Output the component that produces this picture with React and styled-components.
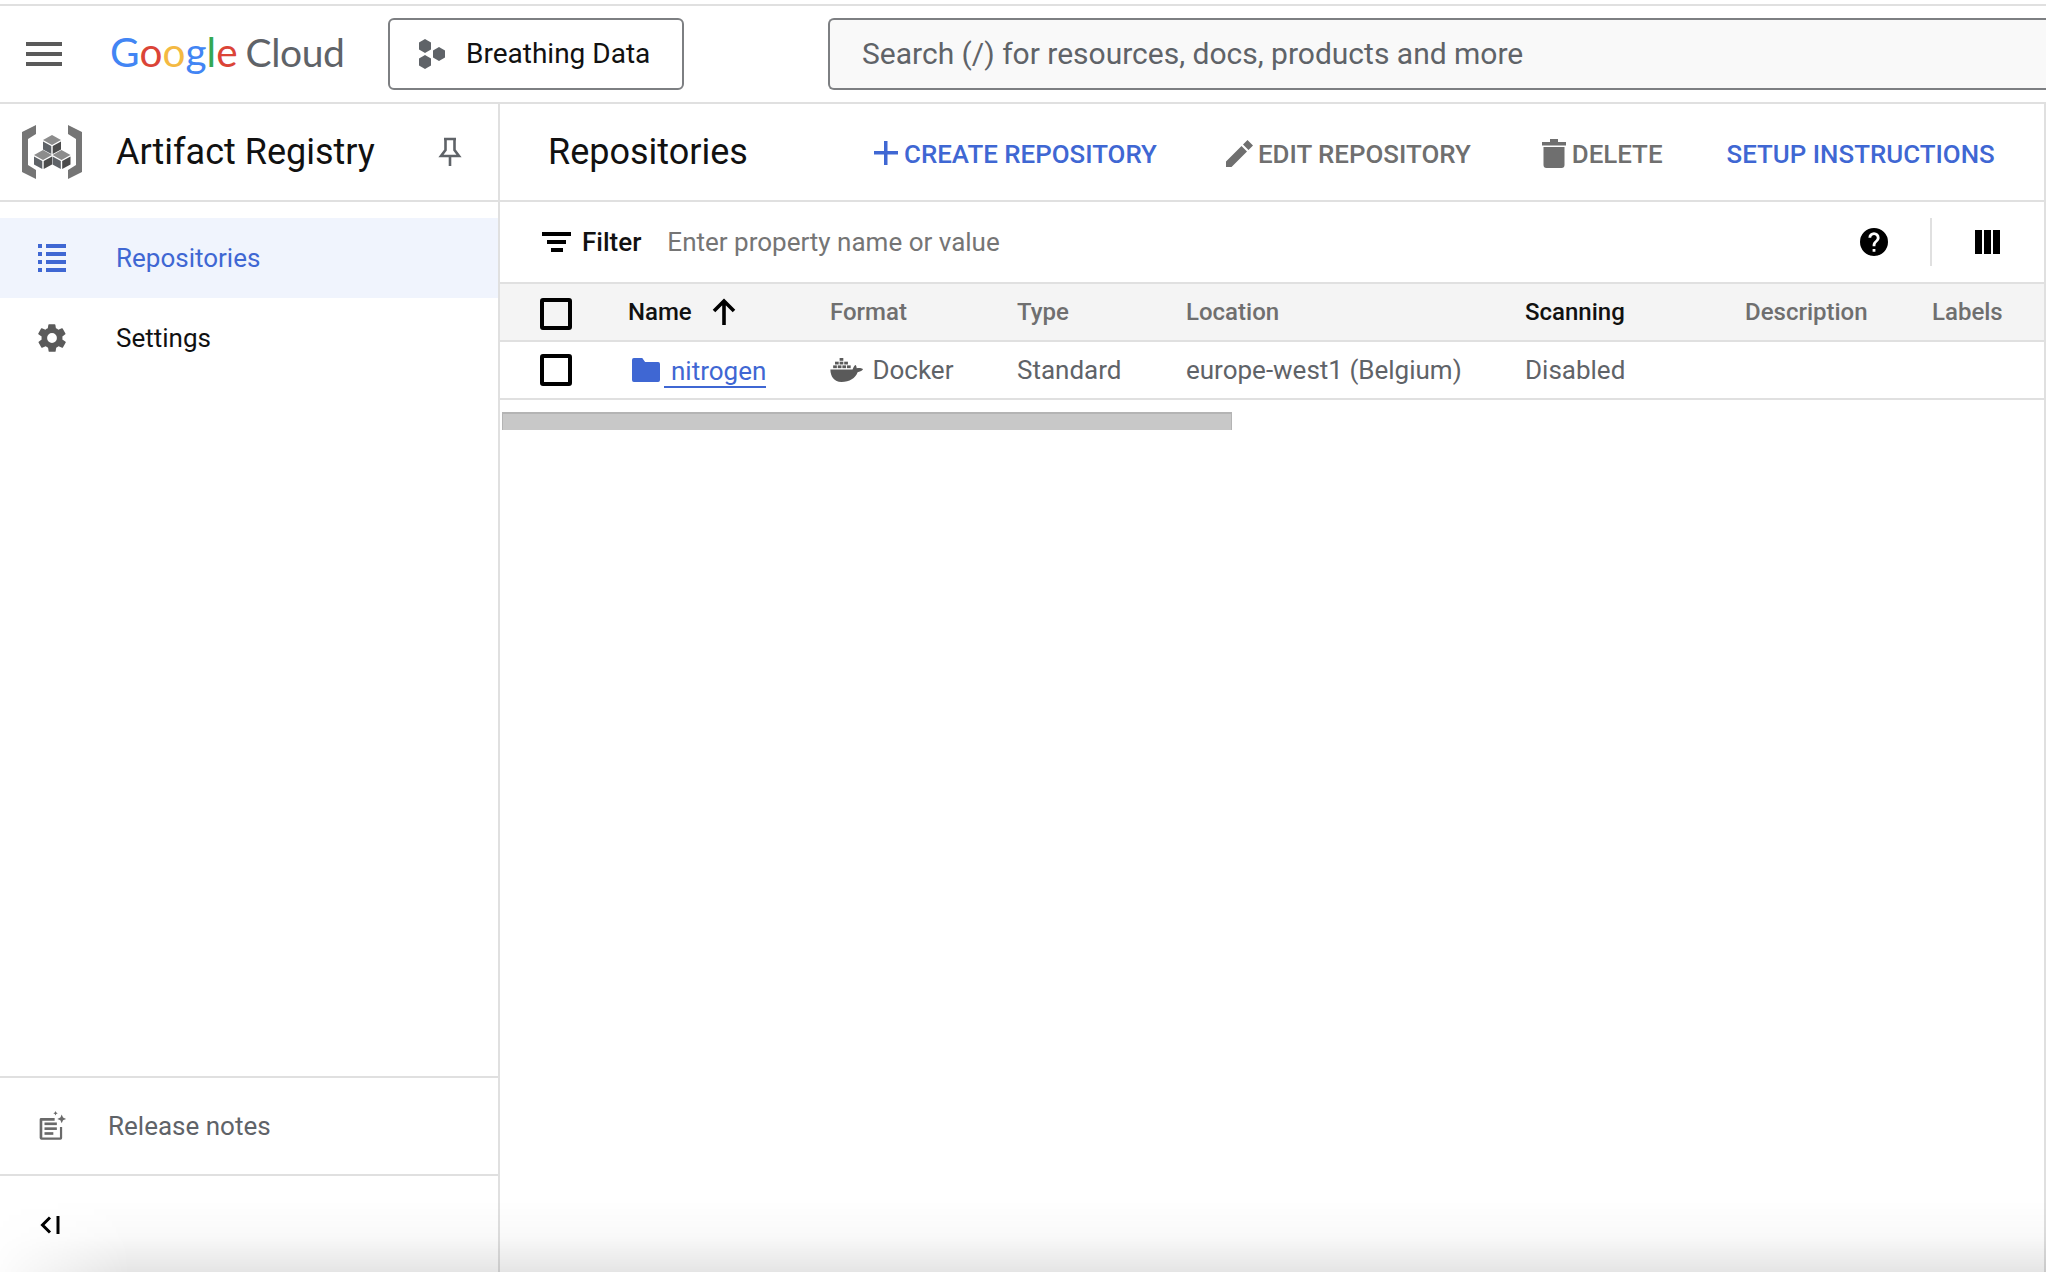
import React from "react";
import styled, { createGlobalStyle } from "styled-components";

const GlobalStyle = createGlobalStyle`
  html, body {
    margin: 0;
    padding: 0;
    height: 100%;
    background: #fff;
    overflow: hidden;
  }
  #root { height: 100%; }
`;

const BLUE = "#3f67d3";
const LINE = "#e0e0e0";
const GREY = "#6f6f6f";

// PAGE
const Page = styled.div`
  position: relative;
  width: 2046px;
  height: 1272px;
  display: flex;
  flex-direction: column;
  font-family: Roboto, "Liberation Sans", sans-serif;
  color: #111;
  overflow: hidden;
  background: #fff;
  padding-top: 4px;
  box-sizing: border-box;
`;

const BottomShade = styled.div`
  position: absolute;
  left: 0;
  right: 0;
  bottom: 0;
  height: 72px;
  pointer-events: none;
  background: linear-gradient(to bottom, rgba(0,0,0,0), rgba(0,0,0,0.025) 50%, rgba(0,0,0,0.1));
  mask-image: linear-gradient(to right, rgba(0,0,0,0.1), #000 130px);
`;

// TOP BAR
const TopBar = styled.header`
  height: 96px;
  flex: none;
  display: flex;
  align-items: center;
  border-top: 2px solid ${LINE};
  border-bottom: 2px solid ${LINE};
  box-sizing: content-box;
`;
const Burger = styled.div`
  width: 36px;
  margin-left: 26px;
  height: 24px;
  border-top: 4px solid #5a5a5a;
  border-bottom: 4px solid #5a5a5a;
  box-sizing: border-box;
  position: relative;
  flex: none;
  &::after {
    content: "";
    position: absolute;
    left: 0;
    right: 0;
    top: 6px;
    height: 4px;
    background: #5a5a5a;
  }
`;
const Logo = styled.div`
  margin-left: 48px;
  width: 236px;
  display: flex;
  align-items: baseline;
  font-size: 40.5px;
  line-height: 1;
  flex: none;
  padding-bottom: 4px;
  font-family: Lato, Roboto, sans-serif;
`;
const LogoLetter = styled.span`
  color: ${(p) => p.$c};
`;
const LogoCloud = styled.span`
  color: #5f6368;
  margin-left: 8px;
  font-size: 39px;
  letter-spacing: -0.4px;
`;
const ProjectButton = styled.div`
  margin-left: 42px;
  width: 296px;
  height: 72px;
  border: 2px solid #7d7f82;
  border-radius: 6px;
  box-sizing: border-box;
  display: flex;
  align-items: center;
  padding: 0 0 1px 28px;
  gap: 20px;
  font-size: 28px;
  flex: none;
`;
const SearchBox = styled.div`
  margin-left: 144px;
  flex: 1;
  height: 72px;
  border: 2px solid #7d7f82;
  border-right: none;
  border-radius: 6px 0 0 6px;
  box-sizing: border-box;
  background: #f9f9f9;
  display: flex;
  align-items: center;
  padding: 0 0 2px 32px;
  font-size: 30px;
  color: #5f6368;
`;

// BODY
const Body = styled.div`
  flex: 1;
  display: flex;
  min-height: 0;
`;
const Side = styled.aside`
  width: 498px;
  flex: none;
  border-right: 2px solid ${LINE};
  display: flex;
  flex-direction: column;
`;
const SideHead = styled.div`
  height: 96px;
  flex: none;
  border-bottom: 2px solid ${LINE};
  display: flex;
  align-items: center;
  padding-left: 20px;
`;
const SideTitle = styled.div`
  font-size: 36px;
  margin-left: 32px;
  width: 322px;
`;
const SideNav = styled.nav`
  padding-top: 16px;
  flex: 1;
`;
const NavRow = styled.div`
  height: 80px;
  display: flex;
  align-items: center;
  padding-left: 38px;
  font-size: 26px;
  gap: 50px;
  background: ${(p) => (p.$active ? "#f0f4fd" : "transparent")};
  color: ${(p) => (p.$active ? BLUE : "#111")};
`;
const SideFoot = styled.div`
  height: 96px;
  border-top: 2px solid ${LINE};
  display: flex;
  align-items: center;
  padding-left: 37px;
  gap: 41px;
  font-size: 26px;
  color: #5f6368;
`;
const Collapse = styled.div`
  height: 98px;
  border-top: 2px solid ${LINE};
  display: flex;
  align-items: center;
  padding: 2px 0 0 40px;
  box-sizing: border-box;
`;

// MAIN
const Main = styled.main`
  flex: 1;
  min-width: 0;
  display: flex;
  flex-direction: column;
  border-right: 2px solid ${LINE};
`;
const MainHead = styled.div`
  height: 96px;
  flex: none;
  border-bottom: 2px solid ${LINE};
  display: flex;
  align-items: center;
  padding-left: 48px;
`;
const PageTitle = styled.h1`
  margin: 0;
  font-size: 36px;
  font-weight: 400;
  width: 325px;
`;
const Action = styled.div`
  display: flex;
  align-items: center;
  gap: ${(p) => p.$iconGap || 0}px;
  padding-top: 2px;
  font-size: 25.9px;
  font-weight: 500;
  color: ${(p) => (p.$off ? GREY : BLUE)};
  margin-left: ${(p) => p.$gap || 0}px;
  white-space: nowrap;
`;
const ActionLabel = styled.span`
  margin-top: 2px;
`;
const FilterBar = styled.div`
  height: 80px;
  flex: none;
  display: flex;
  align-items: center;
  padding-left: 42px;
  font-size: 26px;
`;
const FilterLabel = styled.span`
  font-weight: 500;
  margin-left: 10px;
`;
const FilterHint = styled.span`
  color: #757575;
  margin-left: 26px;
  flex: 1;
`;
const HelpIcon = styled.div`
  width: 28px;
  height: 28px;
  flex: none;
  margin-right: 42px;
`;
const VDivider = styled.div`
  width: 2px;
  height: 48px;
  background: ${LINE};
  flex: none;
`;
const ColumnsIcon = styled.div`
  width: 25px;
  height: 24px;
  margin: 0 44px 0 43px;
  flex: none;
  background: repeating-linear-gradient(to right, #000 0, #000 7px, transparent 7px, transparent 9px);
`;

const Grid = styled.div`
  display: grid;
  grid-template-columns: 128px 202px 187px 169px 339px 220px 187px 1fr;
  flex: none;
`;
const HeadCell = styled.div`
  height: 56px;
  background: #f4f4f4;
  border-top: 2px solid ${LINE};
  border-bottom: 2px solid ${LINE};
  display: flex;
  align-items: center;
  font-size: 24px;
  font-weight: 500;
  color: ${(p) => (p.$dark ? "#111" : GREY)};
`;
const Cell = styled.div`
  height: 56px;
  border-bottom: 2px solid ${LINE};
  display: flex;
  align-items: center;
  font-size: 26px;
  color: #5f6368;
  white-space: nowrap;
`;
const CheckBox = styled.div`
  width: 32px;
  height: 32px;
  border: 4px solid #000;
  border-radius: 3px;
  box-sizing: border-box;
  margin-left: 40px;
  margin-top: ${(p) => (p.$head ? 4 : 0)}px;
`;
const SortArrow = styled.span`
  display: flex;
  margin-left: 19px;
`;
const RepoLink = styled.a`
  color: ${BLUE};
  display: flex;
  align-items: center;
  height: 100%;
  margin-left: 4px;
  gap: 4px;
`;
const LinkText = styled.span`
  border-bottom: 2px solid ${BLUE};
  padding-left: 7px;
  line-height: 30px;
  margin-top: 3px;
`;
const DockerWrap = styled.span`
  display: flex;
  margin-right: 2px;
`;
const ScrollBar = styled.div`
  width: 730px;
  height: 18px;
  margin: 12px 0 0 2px;
  background: #c8c8c8;
  border-top: 2px solid #b4b4b4;
  border-left: 1px solid #b4b4b4;
  border-right: 1px solid #b4b4b4;
  box-sizing: border-box;
`;

const GoogleLogo = () => (
  <Logo>
    <LogoLetter $c="#4285f4">G</LogoLetter>
    <LogoLetter $c="#db4437">o</LogoLetter>
    <LogoLetter $c="#f4b942">o</LogoLetter>
    <LogoLetter $c="#4285f4">g</LogoLetter>
    <LogoLetter $c="#34a853">l</LogoLetter>
    <LogoLetter $c="#db4437">e</LogoLetter>
    <LogoCloud>Cloud</LogoCloud>
  </Logo>
);

const Hexes = () => (
  <svg width="28" height="30" viewBox="0 0 28 30" fill="#5f6368">
    <polygon points="7,0 13,3.5 13,10.5 7,14 1,10.5 1,3.5" />
    <polygon points="7,16 13,19.5 13,26.5 7,30 1,26.5 1,19.5" />
    <polygon points="21,8 27,11.5 27,18.5 21,22 15,18.5 15,11.5" />
  </svg>
);

const Cube = ({ x, y }) => (
  <>
    <polygon points={`${x},${y} ${x + 9},${y + 5} ${x},${y + 10} ${x - 9},${y + 5}`} fill="#8c8c8c" />
    <polygon points={`${x - 9},${y + 6.5} ${x - 0.7},${y + 11} ${x - 0.7},${y + 19} ${x - 9},${y + 14.5}`} fill="#5f6368" />
    <polygon points={`${x + 9},${y + 6.5} ${x + 0.7},${y + 11} ${x + 0.7},${y + 19} ${x + 9},${y + 14.5}`} fill="#4c4c4c" />
  </>
);

const RegistryIcon = () => (
  <svg width="64" height="56" viewBox="0 0 64 56">
    <polygon points="2,8 16,1 16,10 8,15 8,41 16,46 16,55 2,48" fill="#757575" />
    <polygon points="62,8 48,1 48,10 56,15 56,41 48,46 48,55 62,48" fill="#757575" />
    <Cube x={32} y={11} />
    <Cube x={23} y={26} />
    <Cube x={41.500} y={26} />
  </svg>
);

const PinIcon = () => (
  <svg width="24" height="30" viewBox="0 0 24 30" fill="none" stroke="#5f6368" strokeWidth="2.6">
    <path d="M6 2h12M7.500 2v11L3 19h18l-4.500-6V2M12 19v10" />
  </svg>
);

const ListIcon = () => (
  <svg width="28" height="28" viewBox="0 0 28 28" fill={BLUE}>
    <rect x="0" y="0" width="4" height="4" /><rect x="8" y="0" width="20" height="4" />
    <rect x="0" y="8" width="4" height="4" /><rect x="8" y="8" width="20" height="4" />
    <rect x="0" y="16" width="4" height="4" /><rect x="8" y="16" width="20" height="4" />
    <rect x="0" y="24" width="4" height="4" /><rect x="8" y="24" width="20" height="4" />
  </svg>
);

const GearIcon = () => (
  <svg width="28" height="28" viewBox="2 2 20 20" fill="#5a5a5a">
    <path d="M19.4 13a7.500 7.500 0 0 0 0-2l2.100-1.600a.5.500 0 0 0 .1-.6l-2-3.500a.5.500 0 0 0-.6-.2l-2.500 1a7.300 7.300 0 0 0-1.700-1l-.4-2.600a.5.500 0 0 0-.5-.4h-4a.5.500 0 0 0-.5.400l-.4 2.600a7.300 7.300 0 0 0-1.700 1l-2.500-1a.5.500 0 0 0-.6.200l-2 3.500a.5.500 0 0 0 .1.600L4.600 11a7.500 7.500 0 0 0 0 2l-2.100 1.600a.5.500 0 0 0-.1.600l2 3.500a.5.500 0 0 0 .6.200l2.500-1a7.300 7.300 0 0 0 1.700 1l.4 2.600a.5.500 0 0 0 .5.400h4a.5.500 0 0 0 .5-.4l.4-2.600a7.300 7.300 0 0 0 1.700-1l2.500 1a.5.500 0 0 0 .6-.2l2-3.500a.5.500 0 0 0-.1-.6zM12 15.500a3.500 3.500 0 1 1 0-7 3.500 3.500 0 0 1 0 7z" />
  </svg>
);

const NotesIcon = () => (
  <svg width="30" height="30" viewBox="0 0 34 34" fill="#6a6a6a">
    <path d="M4 8h16v3H6v19h20V18h2.500v12.500a2 2 0 0 1-2 2H5a2.500 2.500 0 0 1-2-2V10a2 2 0 0 1 1-2z" />
    <rect x="8.500" y="13" width="14" height="3" /><rect x="8.500" y="18.500" width="14" height="3" /><rect x="8.500" y="24" width="10" height="3" />
    <path d="M28 4l1.500 3.500L33 9l-3.500 1.500L28 14l-1.500-3.500L23 9l3.500-1.500z" />
    <path d="M21 0l.8 1.700 1.700.8-1.700.8-.8 1.700-.8-1.700-1.700-.8 1.700-.8z" />
  </svg>
);

const CollapseIcon = () => (
  <svg width="20" height="18" viewBox="0 0 20 18" fill="none" stroke="#000" strokeWidth="3">
    <path d="M10 1.500L2.500 9l7.500 7.500" />
    <path d="M18 0v18" />
  </svg>
);

const PlusIcon = () => (
  <svg width="26" height="26" viewBox="0 0 26 26" fill={BLUE}>
    <rect x="11" y="1" width="3.500" height="24" /><rect x="1" y="11" width="24" height="3.500" />
  </svg>
);

const PencilIcon = () => (
  <svg width="30" height="30" viewBox="0 0 30 30" fill={GREY}>
    <path d="M1 23.500V29h5.500L22 13.500 16.500 8zM28 7.500l-5.500-5.500L18 6.500l5.500 5.500z" />
  </svg>
);

const TrashIcon = () => (
  <svg width="24" height="30" viewBox="0 0 24 30" fill={GREY}>
    <path d="M0 4h8V1h8v3h8v3.500H0zM1.500 9h21v18a3 3 0 0 1-3 3h-15a3 3 0 0 1-3-3z" />
  </svg>
);

const FilterIcon = () => (
  <svg width="30" height="20" viewBox="0 0 30 20" fill="#000">
    <rect x="0" y="0" width="29" height="4" /><rect x="5" y="8" width="19" height="4" /><rect x="9" y="16" width="12" height="4" />
  </svg>
);

const ArrowUp = () => (
  <svg width="26" height="28" viewBox="0 0 26 28" fill="none" stroke="#000" strokeWidth="3.600">
    <path d="M13 27V3M3 13L13 3l10 10" />
  </svg>
);

const FolderIcon = () => (
  <svg width="28" height="24" viewBox="0 0 30 24" fill={BLUE} preserveAspectRatio="none">
    <path d="M0 2a2 2 0 0 1 2-2h9l3 4h14a2 2 0 0 1 2 2v16a2 2 0 0 1-2 2H2a2 2 0 0 1-2-2z" />
  </svg>
);

const DockerIcon = () => (
  <svg width="34" height="24" viewBox="0 0 36 26" fill="#5a5a5a">
    <rect x="10" y="0" width="4" height="3" />
    <rect x="5" y="4" width="4" height="3" /><rect x="10" y="4" width="4" height="3" /><rect x="15" y="4" width="4" height="3" />
    <rect x="3" y="8" width="4" height="3" /><rect x="8" y="8" width="4" height="3" /><rect x="13" y="8" width="4" height="3" /><rect x="18" y="8" width="4" height="3" />
    <path d="M0 12.500h24c1-3 2.500-5 3.500-5 .5 1 1 2.500 1 3.500 2-.5 5-.5 7 1-1.500 2.500-4 3-6 3.500C27 22 21 26 12 26 4 26 0 20 0 12.500z" />
  </svg>
);

const HelpGlyph = () => (
  <svg width="28" height="28" viewBox="2 2 20 20" fill="#000">
    <path d="M12 2a10 10 0 1 0 0 20 10 10 0 0 0 0-20zm1 17h-2v-2h2zm2.070-7.750l-.9.920C13.450 12.900 13 13.500 13 15h-2v-.5c0-1.100.45-2.100 1.170-2.830l1.240-1.260A2 2 0 1 0 10 9H8a4 4 0 1 1 8 0c0 .88-.36 1.680-.93 2.250z" />
  </svg>
);

const COLUMNS = ["Format", "Type", "Location", "Scanning", "Description", "Labels"];

// COMPONENT
function App() {
  return (
    <>
      <GlobalStyle />
      <Page>
        <TopBar>
          <Burger />
          <GoogleLogo />
          <ProjectButton>
            <Hexes />
            Breathing Data
          </ProjectButton>
          <SearchBox>Search (/) for resources, docs, products and more</SearchBox>
        </TopBar>
        <Body>
          <Side>
            <SideHead>
              <RegistryIcon />
              <SideTitle>Artifact Registry</SideTitle>
              <PinIcon />
            </SideHead>
            <SideNav>
              <NavRow $active>
                <ListIcon />
                Repositories
              </NavRow>
              <NavRow>
                <GearIcon />
                Settings
              </NavRow>
            </SideNav>
            <SideFoot>
              <NotesIcon />
              Release notes
            </SideFoot>
            <Collapse>
              <CollapseIcon />
            </Collapse>
          </Side>
          <Main>
            <MainHead>
              <PageTitle>Repositories</PageTitle>
              <Action $iconGap={5}>
                <PlusIcon />
                <ActionLabel>CREATE REPOSITORY</ActionLabel>
              </Action>
              <Action $off $gap={68} $iconGap={3}>
                <PencilIcon />
                <ActionLabel>EDIT REPOSITORY</ActionLabel>
              </Action>
              <Action $off $gap={71} $iconGap={6}>
                <TrashIcon />
                <ActionLabel>DELETE</ActionLabel>
              </Action>
              <Action $gap={64}>
                <ActionLabel>SETUP INSTRUCTIONS</ActionLabel>
              </Action>
            </MainHead>
            <FilterBar>
              <FilterIcon />
              <FilterLabel>Filter</FilterLabel>
              <FilterHint>Enter property name or value</FilterHint>
              <HelpIcon>
                <HelpGlyph />
              </HelpIcon>
              <VDivider />
              <ColumnsIcon />
            </FilterBar>
            <Grid>
              <HeadCell>
                <CheckBox $head />
              </HeadCell>
              <HeadCell $dark>
                Name
                <SortArrow>
                  <ArrowUp />
                </SortArrow>
              </HeadCell>
              {COLUMNS.map((c) => (
                <HeadCell key={c} $dark={c === "Scanning"}>
                  {c}
                </HeadCell>
              ))}
              <Cell>
                <CheckBox />
              </Cell>
              <Cell>
                <RepoLink>
                  <FolderIcon />
                  <LinkText>nitrogen</LinkText>
                </RepoLink>
              </Cell>
              <Cell>
                <DockerWrap>
                  <DockerIcon />
                </DockerWrap>
                &nbsp;Docker
              </Cell>
              <Cell>Standard</Cell>
              <Cell>europe-west1 (Belgium)</Cell>
              <Cell>Disabled</Cell>
              <Cell />
              <Cell />
            </Grid>
            <ScrollBar />
          </Main>
        </Body>
        <BottomShade />
      </Page>
    </>
  );
}

export default App;
